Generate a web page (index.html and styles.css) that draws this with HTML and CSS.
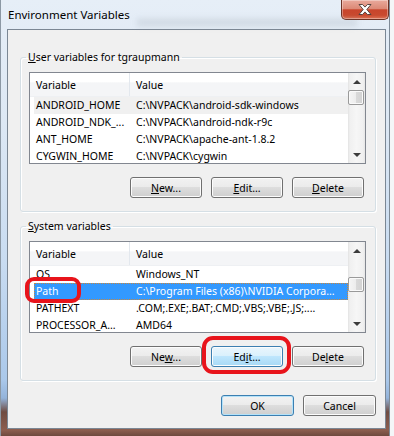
FILE: index.html
```html
<!DOCTYPE html>
<html lang="en">
<head>
  <meta charset="UTF-8" />
  <title>Environment Variables</title>
  <link rel="stylesheet" href="styles.css">
</head>
<body>

<div class="window">
  <div class="titlebar">
    <span class="title">Environment Variables</span>
    <div class="close-btn">
      <svg width="14" height="11" viewBox="0 0 14 11">
        <path d="M1 0.5h3.5l2.5 2.6 2.5-2.6h3.5l-4.2 5 4.2 5h-3.5l-2.5-2.6-2.5 2.6h-3.5l4.2-5z" fill="#fff" stroke="#4a3a36" stroke-width="0.9" stroke-linejoin="round"/>
      </svg>
    </div>
  </div>

  <div class="client">
    <fieldset class="group">
      <legend><u>U</u>ser variables for tgraupmann</legend>
      <div class="listview">
        <div class="lv-main">
          <div class="lv-header">
            <span class="col-var">Variable</span>
            <span class="col-val">Value</span>
          </div>
          <div class="lv-row inactive-sel"><span class="col-var">ANDROID_HOME</span><span class="col-val">C:\NVPACK\android-sdk-windows</span></div>
          <div class="lv-row"><span class="col-var">ANDROID_NDK_...</span><span class="col-val">C:\NVPACK\android-ndk-r9c</span></div>
          <div class="lv-row"><span class="col-var">ANT_HOME</span><span class="col-val">C:\NVPACK\apache-ant-1.8.2</span></div>
          <div class="lv-row"><span class="col-var">CYGWIN_HOME</span><span class="col-val">C:\NVPACK\cygwin</span></div>
        </div>
        <div class="scrollbar">
          <div class="sb-btn"><span class="arrow-up"></span></div>
          <div class="thumb"></div>
          <div class="sb-track"></div>
          <div class="sb-btn"><span class="arrow-down"></span></div>
        </div>
      </div>
      <div class="btn-row">
        <button class="btn"><u>N</u>ew...</button>
        <button class="btn"><u>E</u>dit...</button>
        <button class="btn"><u>D</u>elete</button>
      </div>
    </fieldset>

    <fieldset class="group group-system">
      <legend><u>S</u>ystem variables</legend>
      <div class="listview">
        <div class="lv-main">
          <div class="lv-header">
            <span class="col-var">Variable</span>
            <span class="col-val">Value</span>
          </div>
          <div class="lv-row"><span class="col-var">OS</span><span class="col-val">Windows_NT</span></div>
          <div class="lv-row selected"><span class="col-var">Path</span><span class="col-val">C:\Program Files (x86)\NVIDIA Corpora...</span></div>
          <div class="lv-row"><span class="col-var">PATHEXT</span><span class="col-val">.COM;.EXE;.BAT;.CMD;.VBS;.VBE;.JS;....</span></div>
          <div class="lv-row"><span class="col-var">PROCESSOR_A...</span><span class="col-val">AMD64</span></div>
        </div>
        <div class="scrollbar">
          <div class="sb-btn"><span class="arrow-up"></span></div>
          <div class="thumb thumb-lower"></div>
          <div class="sb-track"></div>
          <div class="sb-btn"><span class="arrow-down"></span></div>
        </div>
      </div>
      <div class="btn-row">
        <button class="btn">Ne<u>w</u>...</button>
        <button class="btn btn-hot">Ed<u>i</u>t...</button>
        <button class="btn">De<u>l</u>ete</button>
      </div>
    </fieldset>

    <div class="dialog-buttons">
      <button class="btn btn-default">OK</button>
      <button class="btn">Cancel</button>
    </div>
  </div>

  <!-- red highlight marks drawn over the dialog -->
  <div class="mark mark-path"></div>
  <div class="mark mark-edit"></div>
</div>

</body>
</html>
```

FILE: styles.css
```css
body {
  margin: 0;
  font-family: "Noto Sans", sans-serif;
  font-size: 10.5px;
  color: #000;
  background: #fff;
}
.window {
  position: relative;
  width: 394px;
  height: 436px;
  box-sizing: border-box;
  padding: 0 8px 7px 7px;
  display: flex;
  flex-direction: column;
  background: linear-gradient(to bottom, #e6eef7 0px, #dde8f4 120px, #c9dcf1 260px, #aac8ea 380px, #93b3da 398px, #6f4c42 412px, #8d5e4f 430px, #6e4a3e 436px);
  box-shadow: inset 1px 0 0 #8c98a4, inset -4px 0 0 #f4f6f8, inset -5px 0 0 #7e8a96;
}
.titlebar {
  position: relative;
  height: 29px;
  flex: none;
  display: flex;
  align-items: flex-start;
}
.titlebar::after {
  content: "";
  position: absolute;
  left: 130px;
  top: 19px;
  width: 220px;
  height: 7px;
  background: rgba(110, 120, 135, 0.18);
  filter: blur(3px);
}
.title {
  padding: 7px 0 0 1px;
  font-size: 11.5px;
  line-height: 16px;
}
.close-btn {
  margin-left: auto;
  margin-right: -3px;
  width: 48px;
  height: 20px;
  box-sizing: border-box;
  display: flex;
  align-items: center;
  justify-content: center;
  border: 1px solid #6d3326;
  border-top: none;
  border-radius: 0 0 5px 5px;
  background: linear-gradient(to bottom, #e9aa9c 0%, #dc8a77 45%, #c8452c 52%, #c94a2f 80%, #dd7356 100%);
  box-shadow: inset 0 0 0 1px rgba(255, 255, 255, 0.35);
}
.client {
  flex: 1;
  border: 1px solid #7b8794;
  background: #f0f0f0;
  display: flex;
  flex-direction: column;
}
.group {
  margin: 20px 9px 0 12px;
  padding: 8px 9px 13px 8px;
  border: 1px solid #d5dfe5;
  border-radius: 3px;
  box-shadow: inset 1px 1px 0 #fff, 1px 1px 0 #fff;
  min-width: 0;
}
.group-system {
  margin-top: 7px;
}
.group legend {
  padding: 0 2px;
  margin-left: -3px;
  line-height: 14px;
}
.listview {
  height: 92px;
  box-sizing: border-box;
  border: 1px solid #828790;
  background: #fff;
  display: flex;
  overflow: hidden;
}
.lv-main {
  flex: 1;
  overflow: hidden;
}
.lv-header {
  height: 24px;
  line-height: 24px;
  display: flex;
  background: linear-gradient(to bottom, #fff 0, #fff 40%, #f4f5f7 42%, #f4f5f7 100%);
  border-bottom: 1px solid #eef0f3;
  box-sizing: border-box;
}
.lv-header .col-var {
  width: 100px;
  box-sizing: border-box;
  padding-left: 6px;
  border-right: 1px solid #e3e8ee;
}
.lv-header .col-val {
  padding-left: 6px;
}
.lv-row {
  margin-left: 4px;
  height: 17px;
  line-height: 17px;
  display: flex;
  white-space: nowrap;
}
.lv-row .col-var {
  width: 96px;
  box-sizing: border-box;
  padding-left: 2px;
  flex: none;
}
.lv-row .col-val {
  padding-left: 6px;
}
.lv-row.inactive-sel {
  background: #f0f0f0;
}
.lv-row.selected {
  background: #3399ff;
  color: #fff;
  outline: 1px dotted #c9873e;
  outline-offset: -1px;
}
.scrollbar {
  width: 17px;
  flex: none;
  display: flex;
  flex-direction: column;
  background: linear-gradient(to right, #e3e3e3 0, #f0f0f0 2px, #f6f6f6 50%, #f0f0f0 15px, #e6e6e6 17px);
}
.sb-btn {
  height: 17px;
  flex: none;
  display: flex;
  align-items: center;
  justify-content: center;
}
.sb-track {
  flex: 1;
}
.arrow-up {
  width: 0;
  height: 0;
  border-left: 4px solid transparent;
  border-right: 4px solid transparent;
  border-bottom: 4px solid #3c3c3c;
}
.arrow-down {
  width: 0;
  height: 0;
  border-left: 4px solid transparent;
  border-right: 4px solid transparent;
  border-top: 4px solid #3c3c3c;
}
.thumb {
  height: 15px;
  margin: 0 1px 0 0;
  flex: none;
  box-sizing: border-box;
  border: 1px solid #9a9a9a;
  border-radius: 2px;
  background: linear-gradient(to right, #f5f5f5 0%, #ececec 50%, #d9d9d9 51%, #d2d2d2 100%);
  box-shadow: inset 0 0 0 1px #fafafa;
}
.thumb-lower {
  margin-top: 18px;
}
.btn-row {
  display: flex;
  justify-content: flex-end;
  gap: 9px;
  margin-top: 13px;
  padding-right: 2px;
}
.btn {
  width: 72px;
  height: 21px;
  padding: 0;
  box-sizing: border-box;
  font-family: inherit;
  font-size: inherit;
  color: #000;
  border: 1px solid #707070;
  border-radius: 3px;
  background: linear-gradient(to bottom, #f2f2f2 0%, #ebebeb 49%, #dddddd 50%, #cfcfcf 100%);
  box-shadow: inset 0 0 0 1px #fcfcfc;
}
.btn-hot {
  border-color: #3c7fb1;
  background: linear-gradient(to bottom, #eaf6fd 0%, #d9f0fc 49%, #bee6fd 50%, #a7d9f5 100%);
}
.btn-default {
  border-color: #3c7fb1;
  box-shadow: inset 0 0 0 1px #b4e2f9;
}
.dialog-buttons {
  display: flex;
  justify-content: flex-end;
  gap: 9px;
  margin: 14px 9px 0 0;
}
.dialog-buttons .btn {
  width: 73px;
}
.mark {
  position: absolute;
  box-sizing: border-box;
  border: 4px solid #e8141b;
}
.mark-path {
  left: 25px;
  top: 277px;
  width: 56px;
  height: 26px;
  border-radius: 9px;
}
.mark-edit {
  left: 202px;
  top: 336px;
  width: 89px;
  height: 38px;
  border-radius: 11px;
}
```
